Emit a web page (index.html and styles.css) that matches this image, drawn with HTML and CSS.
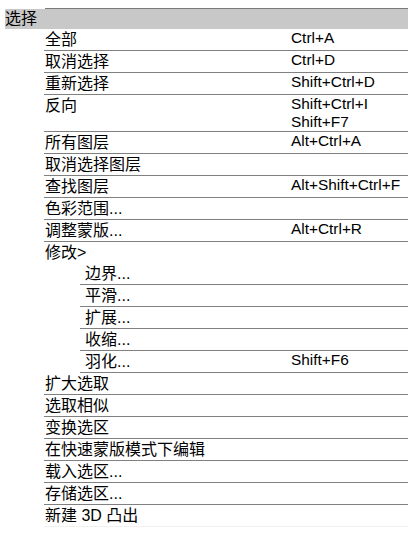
FILE: index.html
```html
<!DOCTYPE html>
<html lang="zh-CN">
<head>
<meta charset="utf-8">
<title>选择</title>
<link rel="stylesheet" href="styles.css">
</head>
<body>
<div class="menu">
  <div class="topline"></div>
  <div class="header">选择</div>
  <div class="items">
    <div class="row"><span class="label">全部</span><span class="key">Ctrl+A</span></div>
    <div class="row"><span class="label">取消选择</span><span class="key">Ctrl+D</span></div>
    <div class="row"><span class="label">重新选择</span><span class="key">Shift+Ctrl+D</span></div>
    <div class="row"><span class="label">反向</span><span class="key">Shift+Ctrl+I<br>Shift+F7</span></div>
    <div class="row"><span class="label">所有图层</span><span class="key">Alt+Ctrl+A</span></div>
    <div class="row"><span class="label">取消选择图层</span><span class="key"></span></div>
    <div class="row"><span class="label">查找图层</span><span class="key">Alt+Shift+Ctrl+F</span></div>
    <div class="row"><span class="label">色彩范围...</span><span class="key"></span></div>
    <div class="row"><span class="label">调整蒙版...</span><span class="key">Alt+Ctrl+R</span></div>
    <div class="row plain"><span class="label">修改&gt;</span><span class="key"></span></div>
    <div class="sub">
      <div class="row"><span class="label">边界...</span><span class="key"></span></div>
      <div class="row"><span class="label">平滑...</span><span class="key"></span></div>
      <div class="row"><span class="label">扩展...</span><span class="key"></span></div>
      <div class="row"><span class="label">收缩...</span><span class="key"></span></div>
      <div class="row"><span class="label">羽化...</span><span class="key">Shift+F6</span></div>
    </div>
    <div class="row"><span class="label">扩大选取</span><span class="key"></span></div>
    <div class="row"><span class="label">选取相似</span><span class="key"></span></div>
    <div class="row"><span class="label">变换选区</span><span class="key"></span></div>
    <div class="row"><span class="label">在快速蒙版模式下编辑</span><span class="key"></span></div>
    <div class="row"><span class="label">载入选区...</span><span class="key"></span></div>
    <div class="row"><span class="label">存储选区...</span><span class="key"></span></div>
    <div class="row last"><span class="label">新建 3D 凸出</span><span class="key"></span></div>
  </div>
</div>
</body>
</html>
```
FILE: styles.css
```css
html, body {
  margin: 0;
  padding: 0;
  background: #ffffff;
}

.menu {
  width: 417px;
  padding-top: 8px;
  font-family: "Liberation Sans", "Noto Sans CJK SC", sans-serif;
  font-size: 16px;
  color: #000000;
}

.topline {
  margin-left: 45px;
  width: 363px;
  height: 1px;
  background: #7a7a7a;
}

.header {
  margin-left: 5px;
  width: 403px;
  height: 20px;
  line-height: 20px;
  background: #c8c8c8;
}

.items {
  margin-left: 44px;
  width: 364px;
}

.row {
  display: grid;
  grid-template-columns: 247px 1fr;
  align-items: start;
  border-bottom: 1px solid #808080;
}

.row.plain {
  border-bottom: none;
}

.row.last {
  border-bottom: 1px solid #f0f0f0;
}

.label {
  padding-left: 1px;
  line-height: 21px;
  white-space: nowrap;
}

.key {
  font-size: 15.4px;
  line-height: 18px;
  white-space: nowrap;
}

.sub {
  margin-left: 36px;
}

.sub .row {
  grid-template-columns: 211px 1fr;
}

.sub .label {
  padding-left: 5px;
}
```
